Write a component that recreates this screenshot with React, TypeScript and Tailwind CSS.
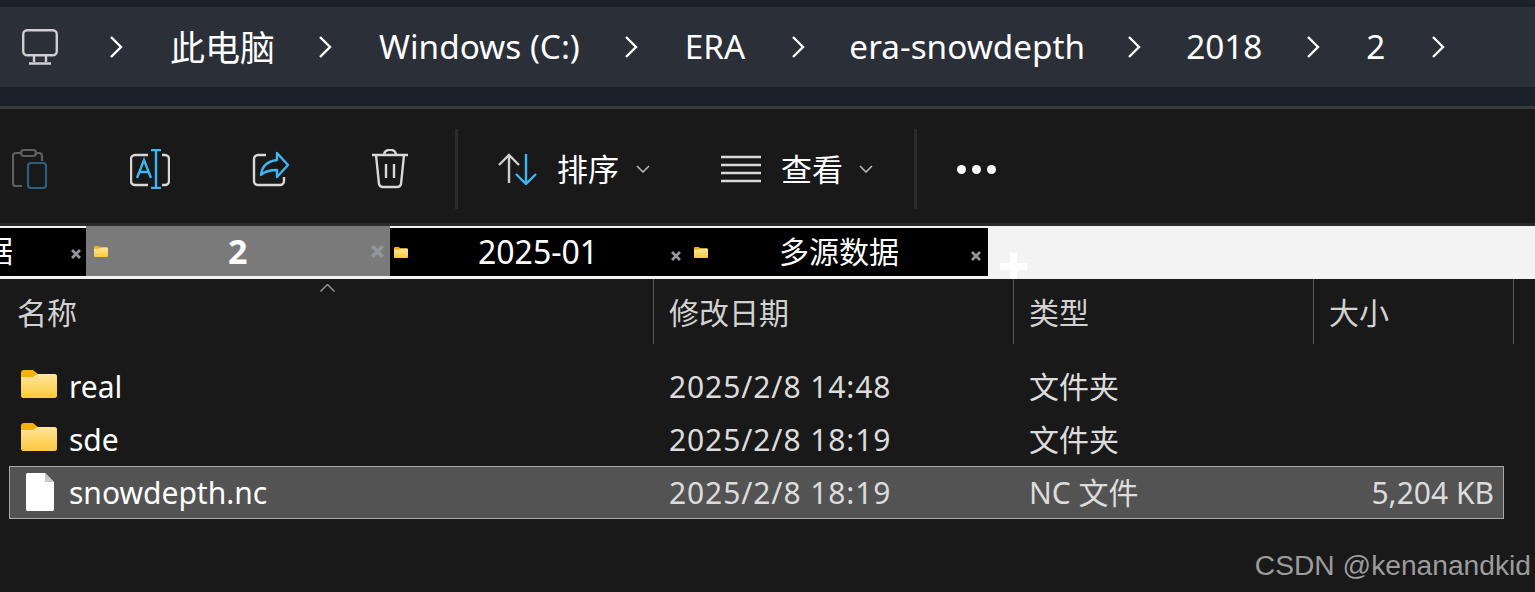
import React from "react";

function Chevron({ className }: { className: string }) {
  return (
    <svg className={className} width="14" height="24" viewBox="0 0 14 24" fill="none" stroke="#fff" strokeWidth="2.4">
      <path d="M2 2l10 10L2 22" />
    </svg>
  );
}

function Crumb({ label, className }: { label: string; className: string }) {
  return <span className={`whitespace-nowrap leading-none text-white ${className}`}>{label}</span>;
}

function SmallChevron({ className }: { className: string }) {
  return (
    <svg className={className} width="14" height="8" viewBox="0 0 14 8" fill="none" stroke="#b5b5b5" strokeWidth="1.6">
      <path d="M1 1l6 6 6-6" />
    </svg>
  );
}

function FolderIcon({ size, className = "" }: { size: "sm" | "lg"; className?: string }) {
  const w = size === "lg" ? 36 : 14;
  const h = size === "lg" ? 28 : 11;
  return (
    <svg className={`shrink-0 ${className}`} width={w} height={h} viewBox="0 0 36 28">
      <defs>
        <linearGradient id="folderFront" x1="0" y1="0" x2="0" y2="1">
          <stop offset="0" stopColor="#ffe69a" />
          <stop offset="1" stopColor="#fcc83c" />
        </linearGradient>
      </defs>
      <path d="M0 3a3 3 0 0 1 3-3h9l5 4h16a3 3 0 0 1 3 3v18a3 3 0 0 1-3 3H3a3 3 0 0 1-3-3z" fill="#f5b10c" />
      <path d="M0 7h12l5-3h16a3 3 0 0 1 3 3v18a3 3 0 0 1-3 3H3a3 3 0 0 1-3-3z" fill="url(#folderFront)" />
    </svg>
  );
}

function CloseX({ className, px = 10 }: { className: string; px?: number }) {
  return (
    <svg className={className} width={px} height={px} viewBox="0 0 10 10" stroke="#93969a" strokeWidth="2.8">
      <path d="M1 1l8 8M9 1l-8 8" />
    </svg>
  );
}

function Tab({
  width,
  label,
  folderX,
  closeX,
  labelClass,
}: {
  width: string;
  label: string;
  folderX: string;
  closeX: string;
  labelClass: string;
}) {
  return (
    <div className={`flex h-[48px] shrink-0 items-center bg-black ${width}`}>
      <div className={`flex w-full items-center ${folderX}`}>
        <FolderIcon size="sm" />
        <span className={`whitespace-nowrap leading-none text-white ${labelClass}`}>{label}</span>
        <CloseX className={`ml-auto translate-y-[4px] ${closeX}`} />
      </div>
    </div>
  );
}

function HeaderCell({ label, pad }: { label: string; pad: string }) {
  return (
    <div className={`flex h-[65px] items-center border-r border-[#5a5a5a] text-[30px] leading-none text-[#d2d2d2] ${pad}`}>
      <span className="translate-y-[1px]">{label}</span>
    </div>
  );
}

const rowText = "whitespace-nowrap text-[30px] leading-none text-[#dcdcdc]";

function Row({ name, date, type, size, icon }: { name: string; date: string; type: string; size?: string; icon: React.ReactNode }) {
  return (
    <div
      className={`ml-[9px] grid h-[53px] w-[1495px] grid-cols-[59px_600px_360px_284px_1fr] items-center border ${
        size ? "border-[#a8a8a8] bg-[#535353]" : "border-transparent"
      }`}
    >
      <div className="flex justify-center">{icon}</div>
      <span className={`${rowText} text-white`}>{name}</span>
      <span className={`${rowText} tracking-[0.9px]`}>{date}</span>
      <span className={rowText}>{type}</span>
      <span className={`${rowText} pr-[9px] text-right`}>{size}</span>
    </div>
  );
}

export default function App() {
  return (
    <div className="h-[592px] w-[1535px] overflow-hidden bg-[#191919] [font-family:'Noto_Sans','Noto_Sans_CJK_SC',sans-serif]">
      {/* address bar */}
      <div className="h-[106px] bg-[#1c202b] pt-[7px]">
        <div className="flex h-[80px] items-center bg-[#2b2f38]">
          <svg className="ml-[22px]" width="36" height="36" viewBox="0 0 36 36" fill="none" stroke="#cfcfcf" strokeWidth="2.4">
            <rect x="1.2" y="1.2" width="33.6" height="25" rx="4" />
            <path d="M12 27v6M24 27v6M7 34.5h22" />
          </svg>
          <Chevron className="ml-[51px]" />
          <Crumb label="此电脑" className="ml-[47px] text-[35px]" />
          <Chevron className="ml-[43px]" />
          <Crumb label="Windows (C:)" className="ml-[47px] text-[33.3px]" />
          <Chevron className="ml-[44px]" />
          <Crumb label="ERA" className="ml-[47px] text-[33.3px]" />
          <Chevron className="ml-[46px]" />
          <Crumb label="era-snowdepth" className="ml-[44px] text-[33.3px]" />
          <Chevron className="ml-[42px]" />
          <Crumb label="2018" className="ml-[45px] text-[33.3px]" />
          <Chevron className="ml-[44px]" />
          <Crumb label="2" className="ml-[46px] text-[33.3px]" />
          <Chevron className="ml-[46px]" />
        </div>
      </div>

      {/* toolbar */}
      <div className="flex h-[117px] items-center border-t-[3px] border-[#3a3a3a] pt-[6px]">
        <svg className="ml-[12px]" width="36" height="40" viewBox="0 0 36 40" fill="none" strokeWidth="2.2">
          <path d="M10 37H4a3 3 0 0 1-3-3V7a3 3 0 0 1 3-3h5M24 4h3a3 3 0 0 1 3 3v5" stroke="#5f5f5f" />
          <rect x="9" y="1" width="15" height="6" rx="3" stroke="#5f5f5f" />
          <rect x="16" y="14" width="18" height="25" rx="3" stroke="#2b5f7f" />
        </svg>
        <svg className="ml-[82px]" width="40" height="40" viewBox="0 0 40 40" fill="none" strokeWidth="2.4">
          <path d="M18 6H5a4 4 0 0 0-4 4v22a4 4 0 0 0 4 4h13M32 6h3a4 4 0 0 1 4 4v22a4 4 0 0 1-4 4h-3" stroke="#d8d8d8" />
          <path d="M26 1v38M21 1h10M21 39h10M7 29l7-18 7 18M9 23h10" stroke="#3fb6f2" />
        </svg>
        <svg className="ml-[82px]" width="38" height="36" viewBox="0 0 38 36" fill="none" strokeWidth="2.4">
          <path d="M14 4H6a4 4 0 0 0-4 4v22a4 4 0 0 0 4 4h22a4 4 0 0 0 4-4v-4" stroke="#d8d8d8" />
          <path d="M25 2l11 12-11 12v-7c-7 0-12 1-16 5 1-9 7-14 16-15z" stroke="#3fb6f2" strokeLinejoin="round" />
        </svg>
        <svg className="ml-[81px]" width="38" height="40" viewBox="0 0 38 40" fill="none" stroke="#d8d8d8" strokeWidth="2.4">
          <path d="M1 6h36M5 6l3 29a4 4 0 0 0 4 3h14a4 4 0 0 0 4-3l3-29M13 6c0-7 12-7 12 0M15 15v14M23 15v14" />
        </svg>
        <div className="ml-[46px] h-[80px] w-[3px] bg-[#2b2b2b]" />
        <svg className="ml-[40px]" width="40" height="32" viewBox="0 0 40 32" fill="none" strokeWidth="2.4">
          <path d="M11 30V2M1 12L11 2l10 10" stroke="#d0d0d0" />
          <path d="M28 1v29M18 21l10 10 10-10" stroke="#3fb6f2" />
        </svg>
        <span className="ml-[19px] text-[31px] leading-none text-white">排序</span>
        <SmallChevron className="ml-[17px]" />
        <svg className="ml-[71px]" width="40" height="28" viewBox="0 0 40 28" stroke="#d8d8d8" strokeWidth="2.4">
          <path d="M0 2h40M0 10h40M0 18h40M0 26h40" />
        </svg>
        <span className="ml-[20px] text-[31px] leading-none text-white">查看</span>
        <SmallChevron className="ml-[16px]" />
        <div className="ml-[41px] h-[80px] w-[3px] bg-[#2b2b2b]" />
        <div className="ml-[40px] flex gap-[6px]">
          <div className="size-[9px] rounded-full bg-white" />
          <div className="size-[9px] rounded-full bg-white" />
          <div className="size-[9px] rounded-full bg-white" />
        </div>
      </div>

      {/* tab strip, pasted over the window */}
      <div className="flex h-[56px] border-t-[3px] border-[#2b2b2b] bg-[#f3f3f3]">
        <div className="flex h-[50px] shrink-0 pt-[2px]">
          <div className="relative h-[48px] w-[86px] shrink-0 overflow-hidden bg-black">
            <span className="absolute right-[73px] top-[8px] whitespace-nowrap text-[30px] leading-none text-white">据</span>
            <CloseX className="absolute left-[71px] top-[21px]" />
          </div>
          <div className="-mt-[2px] flex h-[50px] w-[304px] shrink-0 items-center bg-[#7a7a7a] pl-[8px]">
            <FolderIcon size="sm" />
            <span className="ml-[120px] text-[34px] font-bold leading-none text-white">2</span>
            <CloseX className="ml-auto mr-[6px]" px={13} />
          </div>
          <Tab width="w-[295px]" label="2025-01" folderX="pl-[4px]" closeX="mr-[4px]" labelClass="ml-[70px] text-[32px]" />
          <Tab width="w-[303px]" label="多源数据" folderX="pl-[9px]" closeX="mr-[7px]" labelClass="ml-[71px] text-[30px]" />
        </div>
        <div className="relative h-[53px] flex-1 overflow-hidden">
          <div className="absolute left-[12px] top-[37px] h-[7px] w-[27px] bg-white" />
          <div className="absolute left-[22px] top-[27px] h-[26px] w-[7px] bg-white" />
        </div>
      </div>

      {/* column headers */}
      <div className="relative grid grid-cols-[654px_360px_300px_200px]">
        <HeaderCell label="名称" pad="pl-[17px]" />
        <HeaderCell label="修改日期" pad="pl-[15px]" />
        <HeaderCell label="类型" pad="pl-[15px]" />
        <HeaderCell label="大小" pad="pl-[15px]" />
        <svg className="absolute left-[320px] top-[5px]" width="15" height="8" viewBox="0 0 15 8" fill="none" stroke="#9a9a9a" strokeWidth="1.4">
          <path d="M0.5 7.5l7-7 7 7" />
        </svg>
      </div>

      {/* file rows */}
      <div className="pt-[16px]">
        <Row name="real" date="2025/2/8 14:48" type="文件夹" icon={<FolderIcon size="lg" className="-translate-x-[1px] -translate-y-[3px]" />} />
        <Row name="sde" date="2025/2/8 18:19" type="文件夹" icon={<FolderIcon size="lg" className="-translate-x-[1px] -translate-y-[3px]" />} />
        <Row
          name="snowdepth.nc"
          date="2025/2/8 18:19"
          type="NC 文件"
          size="5,204 KB"
          icon={
            <svg className="-translate-y-[1px]" width="28" height="38" viewBox="0 0 28 38">
              <path d="M0 1.500A1.500 1.500 0 0 1 1.500 0H19l9 9v27.500a1.500 1.500 0 0 1-1.500 1.500h-25A1.500 1.500 0 0 1 0 36.500z" fill="#fff" />
              <path d="M19 0v9h9z" fill="#c8c8c8" />
            </svg>
          }
        />
      </div>

      <div className="mt-[32px] flex justify-end pr-[4px] [font-family:'Liberation_Sans',sans-serif] text-[28.2px] leading-none text-[#9c9c9c]">
        CSDN @kenanandkid
      </div>
    </div>
  );
}
